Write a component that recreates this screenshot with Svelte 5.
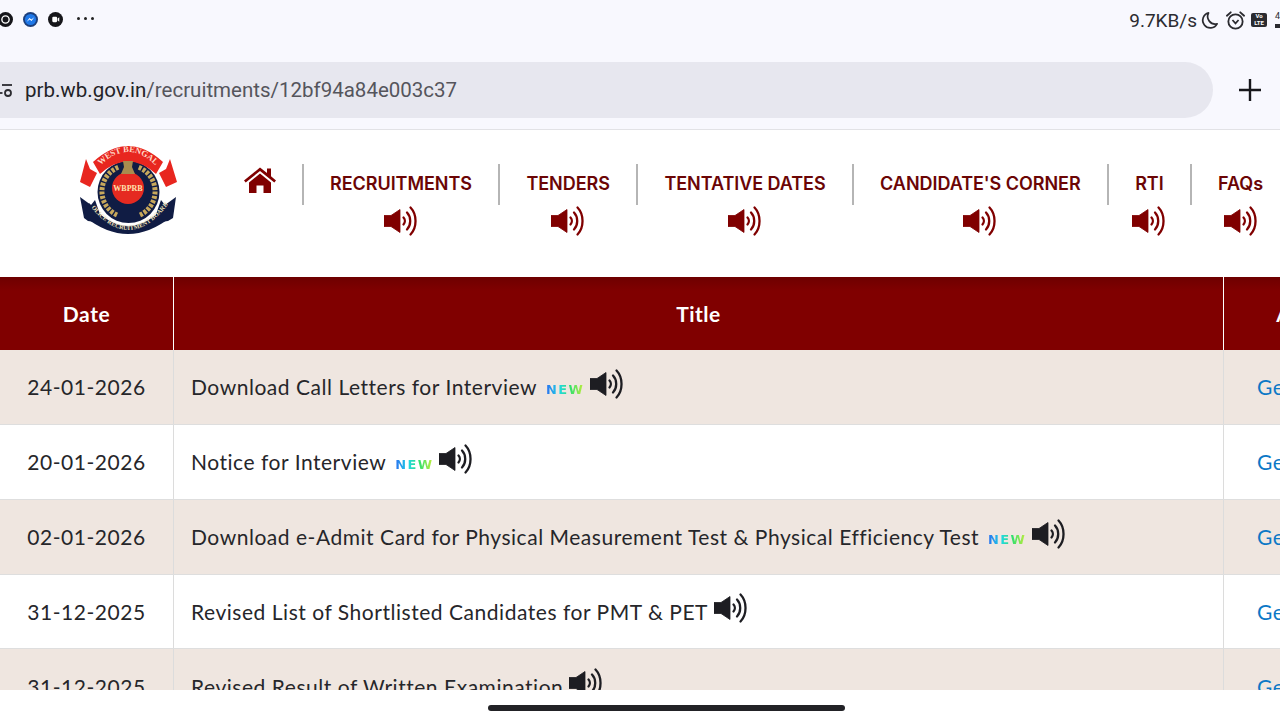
<script>
  const navItems = [
    { label: 'RECRUITMENTS' },
    { label: 'TENDERS' },
    { label: 'TENTATIVE DATES' },
    { label: "CANDIDATE'S CORNER" },
    { label: 'RTI' },
    { label: 'FAQs' }
  ];

  const rows = [
    { date: '24-01-2026', title: 'Download Call Letters for Interview', isNew: true },
    { date: '20-01-2026', title: 'Notice for Interview', isNew: true },
    { date: '02-01-2026', title: 'Download e-Admit Card for Physical Measurement Test & Physical Efficiency Test', isNew: true },
    { date: '31-12-2025', title: 'Revised List of Shortlisted Candidates for PMT & PET', isNew: false },
    { date: '31-12-2025', title: 'Revised Result of Written Examination', isNew: false }
  ];
</script>

{#snippet speaker(cls)}
  <svg class={cls} viewBox="0 0 34 32" fill="none" aria-hidden="true">
    <path d="M0 10.500 H7 L16 4.500 V27.500 L7 21.500 H0 Z" fill="currentColor" stroke="currentColor" stroke-width="0.800" stroke-linejoin="round" />
    <path d="M19.500 12.500 C21.300 14.500 21.300 17.500 19.500 19.500" stroke="currentColor" stroke-width="2.300" stroke-linecap="round" />
    <path d="M23 7.500 C27.300 12 27.300 20 23 24.500" stroke="currentColor" stroke-width="2.300" stroke-linecap="round" />
    <path d="M26.500 2.500 C33.200 9.500 33.200 22.500 26.500 29.500" stroke="currentColor" stroke-width="2.300" stroke-linecap="round" />
  </svg>
{/snippet}

<div class="screen">
  <header class="chrome">
    <div class="status">
      <div class="status-left">
        <svg class="app" viewBox="0 0 14 14" aria-hidden="true">
          <circle cx="7" cy="7" r="7" fill="#16161a" />
          <circle cx="7" cy="7" r="3.400" fill="none" stroke="#fff" stroke-width="1.300" />
        </svg>
        <svg class="app" viewBox="0 0 14 14" aria-hidden="true">
          <circle cx="7" cy="7" r="7" fill="#1c3f7c" />
          <circle cx="7" cy="7" r="5.200" fill="#1f78e8" />
          <path d="M3.500 9 L6 5.500 L7.800 7 L10.500 5 L8 8.500 L6.200 7 Z" fill="#fff" />
        </svg>
        <svg class="app" viewBox="0 0 14 14" aria-hidden="true">
          <circle cx="7" cy="7" r="7" fill="#16161a" />
          <rect x="4" y="4.500" width="4.500" height="5" rx="1" fill="#fff" />
          <path d="M9 6 L10.500 5 V9 L9 8 Z" fill="#fff" />
        </svg>
        <span class="dots"><i></i><i></i><i></i></span>
      </div>
      <div class="status-right">
        <span class="speed">9.7KB/s</span>
        <svg class="moon" viewBox="0 0 20 20" fill="none" aria-hidden="true">
          <path d="M9 2 A8 8 0 1 0 18 13.500 A8 8 0 0 1 9 2 Z" stroke="#2b2b30" stroke-width="1.800" stroke-linejoin="round" />
        </svg>
        <svg class="alarm" viewBox="0 0 22 22" fill="none" aria-hidden="true">
          <circle cx="11" cy="12" r="7.500" stroke="#2b2b30" stroke-width="1.900" />
          <path d="M2 6 L6 2.500 M20 6 L16 2.500" stroke="#2b2b30" stroke-width="2" stroke-linecap="round" />
          <path d="M7.800 10.500 L11 14 L14.200 10.500" stroke="#2b2b30" stroke-width="1.800" />
        </svg>
        <span class="volte">Vo<br />LTE</span>
        <span class="net">4<i></i></span>
      </div>
    </div>
    <div class="url-row">
      <div class="url-pill">
        <svg class="tune" viewBox="0 0 14 18" fill="none" aria-hidden="true">
          <path d="M2 4 H12" stroke="#2b2b30" stroke-width="1.800" />
          <circle cx="8" cy="12" r="3" stroke="#2b2b30" stroke-width="1.800" />
          <path d="M0 12 H2.500" stroke="#2b2b30" stroke-width="1.800" />
        </svg>
        <span class="url"><span class="host">prb.wb.gov.in</span>/recruitments/12bf94a84e003c37</span>
      </div>
      <svg class="plus" viewBox="0 0 24 24" aria-hidden="true">
        <path d="M12 1 V23 M1 12 H23" stroke="#17171b" stroke-width="2.400" />
      </svg>
    </div>
  </header>

  <nav class="site-nav">
    <div class="logo">
      <svg viewBox="0 0 100 94" width="100" height="94" role="img" aria-label="West Bengal Police Recruitment Board">
        <defs>
          <path id="arc-top" d="M17 27 Q49 -9 81 27" />
          <path id="arc-bottom" d="M11 63 Q49 111 88 63" />
        </defs>
        <path d="M7 16 L11 26 L18 30 L11 44 L1 39 Z M91 16 L87 26 L80 30 L87 44 L98 39 Z" fill="#e8261f" />
        <path d="M1 54 L12 62 L16 57 L24 80 L9 78 L5 75 Z M97 54 L86 62 L82 57 L74 80 L89 78 L94 75 Z" fill="#101c44" />
        <circle cx="49.500" cy="49" r="31" fill="#101c44" />
        <path d="M10 60 Q49 106 89 60 L94 70 Q49 106 5 70 Z" fill="#101c44" />
        <path d="M8 62 Q49 110 90 62 L92 74 Q49 108 6 74 Z" fill="#101c44" />
        <path d="M14 19 Q49 -13 84 19 L77 31 Q49 6 21 31 Z" fill="#e8261f" />
        <path d="M38 72 A26 26 0 0 1 40 24 M61 72 A26 26 0 0 0 59 24" fill="none" stroke="#c7a85c" stroke-width="5" stroke-dasharray="3 1.400" />
        <circle cx="49" cy="45" r="16" fill="#e52a21" />
        <path d="M44 18 H54 L53 24 L56 31 H42 L45 24 Z" fill="#a88c4e" />
        <text x="49" y="48" class="logo-mid">WBPRB</text>
        <text class="logo-top"><textPath href="#arc-top" startOffset="50%">WEST BENGAL</textPath></text>
        <text class="logo-bottom"><textPath href="#arc-bottom" startOffset="50%">POLICE RECRUITMENT BOARD</textPath></text>
      </svg>
    </div>
    <ul class="menu">
      <li class="home">
        <svg viewBox="0 0 34 28" width="34" height="28" aria-label="Home">
          <path d="M1 14.500 L17 1.500 L24 7 V2.500 H28 V10.200 L33 14.500 L31.300 16.500 L17 5 L2.700 16.500 Z" fill="#800000" />
          <path d="M6 16.500 L17 7.500 L28 16.500 V27 H20.500 V19.500 H13.500 V27 H6 Z" fill="#800000" />
        </svg>
      </li>
      {#each navItems as item}
        <li class="sep" aria-hidden="true"></li>
        <li class="item">
          <span class="nav-label">{item.label}</span>
          {@render speaker('nav-speaker')}
        </li>
      {/each}
    </ul>
  </nav>

  <main class="table">
    <div class="tr head">
      <div class="td">Date</div>
      <div class="td">Title</div>
      <div class="td">Action</div>
    </div>
    {#each rows as row, i}
      <div class="tr" class:odd={i % 2 === 0}>
        <div class="td date">{row.date}</div>
        <div class="td title">
          <span>{row.title}</span>
          {#if row.isNew}<span class="new">NEW</span>{/if}
          {@render speaker('row-speaker')}
        </div>
        <div class="td action"><a href="#details">Get Details</a></div>
      </div>
    {/each}
  </main>

  <footer class="gesture"><div class="handle"></div></footer>
</div>

<style>
  :global(body) { margin: 0; background: #fff; }

  .screen {
    width: 1280px;
    height: 720px;
    overflow: hidden;
    display: flex;
    flex-direction: column;
    font-family: Lato, "Noto Sans", sans-serif;
  }

  .chrome {
    height: 130px;
    box-sizing: border-box;
    flex-shrink: 0;
    background: #f8f8fe;
    border-bottom: 1px solid #e2e2e6;
    display: flex;
    flex-direction: column;
    font-family: Roboto, sans-serif;
  }
  .status {
    height: 62px;
    display: flex;
    justify-content: space-between;
    align-items: flex-start;
    padding-top: 10px;
    box-sizing: border-box;
  }
  .status-left { display: flex; align-items: center; gap: 10px; margin-left: -2px; height: 18px; }
  .app { width: 15px; height: 15px; }
  .dots { display: flex; gap: 4px; margin-left: 4px; margin-top: -2px; }
  .dots i { width: 3px; height: 3px; background: #222; border-radius: 50%; }
  .status-right { display: flex; align-items: center; height: 20px; }
  .speed { font-size: 19px; color: #2b2b30; }
  .moon { width: 19px; height: 19px; margin-left: 3px; }
  .alarm { width: 21px; height: 21px; margin-left: 6px; }
  .volte {
    width: 16px;
    height: 14px;
    margin-left: 5px;
    background: #2b2b30;
    color: #fff;
    border-radius: 2px;
    font: 700 6px/6.500px Roboto, sans-serif;
    text-align: center;
  }
  .net {
    width: 5px;
    margin-left: 8px;
    font-size: 9px;
    line-height: 9px;
    color: #2b2b30;
    display: flex;
    flex-direction: column;
    gap: 3px;
  }
  .net i { height: 4px; background: #2b2b30; }

  .url-row { display: flex; align-items: center; }
  .url-pill {
    width: 1213px;
    height: 56px;
    box-sizing: border-box;
    background: #e7e7ef;
    border-radius: 0 28px 28px 0;
    display: flex;
    align-items: center;
    gap: 11px;
  }
  .tune { width: 14px; height: 18px; flex-shrink: 0; }
  .url { font-size: 20.500px; color: #55555c; }
  .host { color: #232328; }
  .plus { width: 24px; height: 24px; margin-left: 25px; }

  .site-nav {
    height: 147px;
    flex-shrink: 0;
    background: #fff;
    display: flex;
    align-items: flex-start;
    padding: 13px 0 0 79px;
    box-sizing: border-box;
  }
  .logo { width: 100px; height: 94px; flex-shrink: 0; }
  .logo-top { font: 700 8.500px "Liberation Serif", serif; fill: #ffd9c8; text-anchor: middle; }
  .logo-bottom { font: 700 6.300px "Liberation Serif", serif; fill: #efe2b8; text-anchor: middle; }
  .logo-mid { font: 700 8px "Liberation Serif", serif; fill: #ffe2b0; text-anchor: middle; }

  .menu {
    list-style: none;
    margin: 21px 0 0 62.500px;
    padding: 0;
    display: flex;
    align-items: flex-start;
  }
  .menu .home { padding: 2px 25px 0 1px; }
  .menu .sep { width: 2.500px; height: 41px; background: #b5b5b5; flex-shrink: 0; }
  .menu .item {
    display: flex;
    flex-direction: column;
    align-items: center;
    padding: 0 26px;
    white-space: nowrap;
  }
  .nav-label {
    font-family: Inter, sans-serif;
    font-size: 18px;
    font-weight: 600;
    line-height: 40px;
    color: #6b0505;
    letter-spacing: -0.05px;
  }
  .nav-speaker { width: 34px; height: 32px; margin: 1px -4px 0; color: #800000; }

  .table { flex: 1; min-height: 0; overflow: hidden; }
  .tr {
    display: grid;
    grid-template-columns: 174px 1050px 170px;
    width: 1394px;
    height: 74.850px;
    box-sizing: border-box;
    border-bottom: 1px solid #dedede;
    background: #fff;
  }
  .tr.odd { background: #efe6e0; }
  .td {
    display: flex;
    align-items: center;
    border-right: 1px solid #dcdcdc;
    color: #26262a;
    font-size: 21px;
    letter-spacing: 0.53px;
  }
  .tr.head {
    height: 73px;
    background: linear-gradient(180deg, #6e0000, #800000 14px);
    border-bottom: none;
  }
  .head .td {
    justify-content: center;
    color: #fff;
    font-weight: 700;
    border-right-color: #fff;
    padding-bottom: 1px;
  }
  .date { justify-content: center; }
  .title { padding-left: 17px; gap: 9px; }
  .action { padding-left: 33px; }
  .action a { color: #0b78c6; text-decoration: none; }
  .new {
    font-family: "DejaVu Sans", sans-serif;
    font-size: 13px;
    font-weight: 700;
    letter-spacing: 1.300px;
    width: 38px;
    margin-top: 5px;
    background: linear-gradient(90deg, #2a6cf0, #1ed8e6 35%, #35e06a 65%, #c6ee3c);
    -webkit-background-clip: text;
    background-clip: text;
    color: transparent;
  }
  .row-speaker { width: 34px; height: 32px; margin-top: -6px; margin-left: -3px; color: #1d1d22; }

  .gesture {
    height: 30px;
    flex-shrink: 0;
    background: #fff;
    padding-left: 488px;
    padding-top: 15px;
    box-sizing: border-box;
  }
  .handle { width: 357px; height: 6px; background: #222226; border-radius: 3px; }
</style>
